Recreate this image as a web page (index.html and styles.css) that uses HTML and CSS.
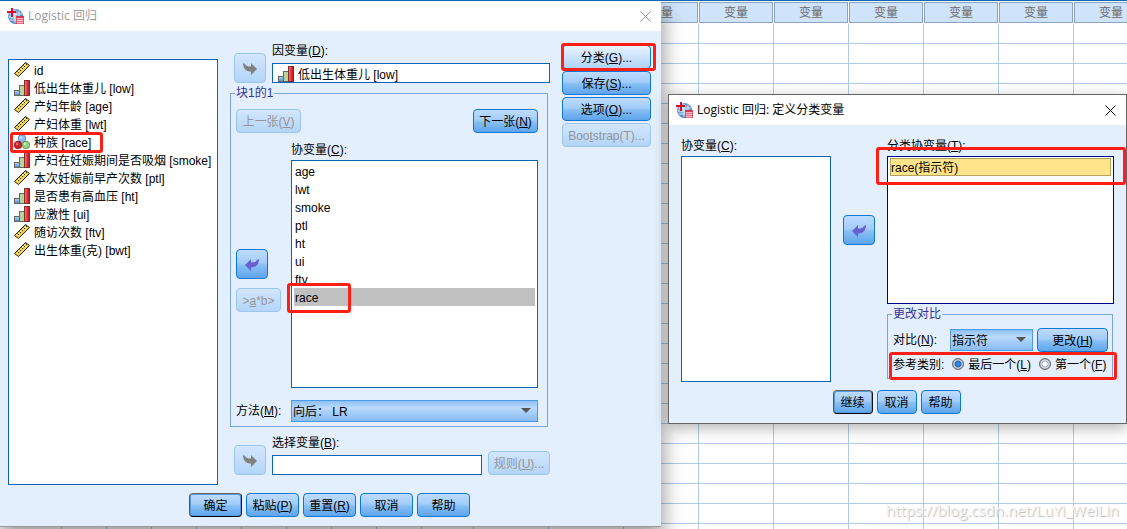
FILE: index.html
```html
<!DOCTYPE html>
<html lang="zh-CN">
<head>
    <meta charset="UTF-8">
    <meta name="viewport" content="width=device-width, initial-scale=1.0">
    <title>Logistic 回归</title>
    <link rel="stylesheet" href="styles.css">
</head>
<body>
    <!-- 图标定义 -->
    <svg class="defs" width="0" height="0" aria-hidden="true">
        <defs>
            <linearGradient id="gBlue" x1="0" y1="0" x2="0" y2="1"><stop offset="0" stop-color="#b5d4f5"/><stop offset="1" stop-color="#4a8ad2"/></linearGradient>
            <linearGradient id="gRed" x1="0" y1="0" x2="1" y2="0"><stop offset="0" stop-color="#ff7777"/><stop offset="1" stop-color="#c80008"/></linearGradient>
            <radialGradient id="gGlobe" cx="0.4" cy="0.4" r="0.7"><stop offset="0" stop-color="#b9d8f2"/><stop offset="1" stop-color="#2a6fb4"/></radialGradient>
        </defs>
        <symbol id="scale" viewBox="0 0 16 16">
            <path d="M0.500 11.500L11.500 0.500L15.500 3.500L4.500 14.500Z" fill="#f8cf3c" stroke="#222" stroke-width="1"/>
            <path d="M2.500 11.500L12 2" stroke="#fff2a8" stroke-width="1"/>
            <path d="M5.500 7.500l1.500 1.500M7.500 5.500l1.500 1.500M9.500 3.500l1.500 1.500M3.500 9.500l1.500 1.500M11.500 1.500l1.500 1.500" stroke="#222" stroke-width="1"/>
        </symbol>
        <symbol id="ordinal" viewBox="0 0 16 16">
            <rect x="0.500" y="10.500" width="5" height="5" fill="url(#gBlue)" stroke="#666"/>
            <rect x="5.500" y="5.500" width="5" height="10" fill="#b5d596" stroke="#666"/>
            <rect x="10.500" y="0.500" width="5" height="15" fill="url(#gRed)" stroke="#7a3030"/>
        </symbol>
        <symbol id="nominal" viewBox="0 0 16 16">
            <circle cx="8" cy="4.500" r="3.800" fill="#8fbdf5" stroke="#4a7ec0" stroke-width="0.800"/>
            <circle cx="4" cy="11" r="3.800" fill="#c9202c" stroke="#8c1420" stroke-width="0.800"/>
            <circle cx="12" cy="11" r="3.800" fill="#98cf80" stroke="#4f8a3c" stroke-width="0.800"/>
            <circle cx="7" cy="3.500" r="1.200" fill="#d5e8ff"/>
            <circle cx="3" cy="10" r="1.200" fill="#ee7a80"/>
            <circle cx="11" cy="10" r="1.200" fill="#d5f0c8"/>
        </symbol>
        <symbol id="spss" viewBox="0 0 17 17">
            <circle cx="8.500" cy="8.500" r="7.500" fill="url(#gGlobe)"/>
            <path d="M3 6h12M2 9h8M3 12h6M8 2v13M12 3v5" stroke="#e8f3fc" stroke-width="0.800"/>
            <path d="M4 0h2v3h3v2h-3v4h-2v-4h-4v-2h4z" fill="#d4102c"/>
            <rect x="9" y="8" width="8" height="8" fill="#d83850"/>
            <path d="M9.500 10.500h7M9.500 12.500h7M9.500 14.500h7M11 10v6M13 10v6M15 10v6" stroke="#fbd9de" stroke-width="0.700"/>
        </symbol>
        <symbol id="arrow" viewBox="0 0 16 14">
            <path d="M1 1l2 1c1 2 2.500 2.500 6 2.500v-3.500l6 6l-6 6v-3.500c-4.500 0-8-2.500-8-8.500z"/>
        </symbol>
        <symbol id="close" viewBox="0 0 11 11">
            <path d="M0.500 0.500l10 10M10.500 0.500l-10 10" fill="none" stroke="currentColor"/>
        </symbol>
    </svg>

    <div class="desktop">
        <table class="sheet">
            <colgroup id="sheetCols"></colgroup>
            <thead><tr id="sheetHead"></tr></thead>
            <tbody id="sheetBody"></tbody>
        </table>
        <p class="watermark">https://blog.csdn.net/LuYi_WeiLin</p>

        <!-- Logistic 回归 -->
        <section class="dialog dialog-main" aria-labelledby="mainTitle">
            <header class="titlebar inactive">
                <svg class="logo"><use href="#spss"/></svg>
                <h1 id="mainTitle">Logistic 回归</h1>
                <button class="close" aria-label="关闭"><svg><use href="#close"/></svg></button>
            </header>
            <div class="main-cols">
                <ul class="list source-list" role="listbox" aria-label="变量">
                    <li><svg><use href="#scale"/></svg>id</li>
                    <li><svg><use href="#ordinal"/></svg>低出生体重儿 [low]</li>
                    <li><svg><use href="#scale"/></svg>产妇年龄 [age]</li>
                    <li><svg><use href="#scale"/></svg>产妇体重 [lwt]</li>
                    <li class="marked"><svg><use href="#nominal"/></svg>种族 [race]<i class="mark mark-source"></i></li>
                    <li><svg><use href="#ordinal"/></svg>产妇在妊娠期间是否吸烟 [smoke]</li>
                    <li><svg><use href="#scale"/></svg>本次妊娠前早产次数 [ptl]</li>
                    <li><svg><use href="#ordinal"/></svg>是否患有高血压 [ht]</li>
                    <li><svg><use href="#ordinal"/></svg>应激性 [ui]</li>
                    <li><svg><use href="#scale"/></svg>随访次数 [ftv]</li>
                    <li><svg><use href="#scale"/></svg>出生体重(克) [bwt]</li>
                </ul>

                <div class="middle">
                    <div class="move-row">
                        <button class="btn move" disabled aria-label="移入因变量"><svg><use href="#arrow"/></svg></button>
                        <div class="field">
                            <span class="label" id="depLabel">因变量(<u>D</u>):</span>
                            <ul class="list single" role="listbox" aria-labelledby="depLabel">
                                <li><svg><use href="#ordinal"/></svg>低出生体重儿 [low]</li>
                            </ul>
                        </div>
                    </div>

                    <fieldset class="group block">
                        <legend>块1的1</legend>
                        <div class="pager">
                            <button class="btn" disabled>上一张(<u>V</u>)</button>
                            <button class="btn">下一张(<u>N</u>)</button>
                        </div>
                        <div class="covariates">
                            <div class="side">
                                <button class="btn move back" aria-label="移出协变量"><svg><use href="#arrow"/></svg></button>
                                <button class="btn" disabled>&gt;<u>a</u>*b&gt;</button>
                            </div>
                            <div class="field tight">
                                <span class="label" id="covLabel">协变量(<u>C</u>):</span>
                                <ul class="list cov-list" role="listbox" aria-labelledby="covLabel">
                                    <li>age</li>
                                    <li>lwt</li>
                                    <li>smoke</li>
                                    <li>ptl</li>
                                    <li>ht</li>
                                    <li>ui</li>
                                    <li>ftv</li>
                                    <li class="marked selected">race<i class="mark mark-cov"></i></li>
                                </ul>
                            </div>
                        </div>
                        <div class="method">
                            <label for="method">方法(<u>M</u>):</label>
                            <span class="select"><select id="method"><option>向后： LR</option></select></span>
                        </div>
                    </fieldset>

                    <div class="move-row">
                        <button class="btn move" disabled aria-label="移入选择变量"><svg><use href="#arrow"/></svg></button>
                        <div class="field">
                            <label class="label" for="selVar">选择变量(<u>B</u>):</label>
                            <input class="text" id="selVar" type="text">
                        </div>
                        <button class="btn rule" disabled>规则(<u>U</u>)...</button>
                    </div>
                </div>

                <div class="options">
                    <div class="marked"><button class="btn hot">分类(<u>G</u>)...</button><i class="mark mark-option"></i></div>
                    <button class="btn">保存(<u>S</u>)...</button>
                    <button class="btn">选项(<u>O</u>)...</button>
                    <button class="btn" disabled>Boo<u>t</u>strap(T)...</button>
                </div>
            </div>
            <footer class="actions">
                <button class="btn default">确定</button>
                <button class="btn">粘贴(<u>P</u>)</button>
                <button class="btn">重置(<u>R</u>)</button>
                <button class="btn">取消</button>
                <button class="btn">帮助</button>
            </footer>
        </section>

        <!-- 定义分类变量 -->
        <section class="dialog dialog-cat" aria-labelledby="catTitle">
            <header class="titlebar">
                <svg class="logo"><use href="#spss"/></svg>
                <h1 id="catTitle">Logistic 回归: 定义分类变量</h1>
                <button class="close" aria-label="关闭"><svg><use href="#close"/></svg></button>
            </header>
            <div class="cat-cols">
                <div class="field tight">
                    <span class="label" id="catCovLabel">协变量(<u>C</u>):</span>
                    <ul class="list fill" role="listbox" aria-labelledby="catCovLabel"></ul>
                </div>
                <button class="btn move back" aria-label="移回协变量"><svg><use href="#arrow"/></svg></button>
                <div class="cat-right">
                    <div class="field tight">
                        <span class="label" id="catLabel">分类协变量(<u>T</u>):</span>
                        <ul class="list cat-list" role="listbox" aria-labelledby="catLabel">
                            <li class="marked focused">race(指示符)<i class="mark mark-cat"></i></li>
                        </ul>
                    </div>
                    <fieldset class="group contrast">
                        <legend>更改对比</legend>
                        <div class="contrast-row">
                            <label for="contrast">对比(<u>N</u>):</label>
                            <span class="select"><select id="contrast"><option>指示符</option></select></span>
                            <button class="btn">更改(<u>H</u>)</button>
                        </div>
                        <div class="marked reference">
                            <span>参考类别:</span>
                            <label><input type="radio" name="ref" checked>最后一个(<u>L</u>)</label>
                            <label><input type="radio" name="ref">第一个(<u>F</u>)</label>
                            <i class="mark mark-ref"></i>
                        </div>
                    </fieldset>
                </div>
            </div>
            <footer class="actions">
                <button class="btn default">继续</button>
                <button class="btn">取消</button>
                <button class="btn">帮助</button>
            </footer>
        </section>
    </div>

    <script>
        // 数据表各列宽度
        const widths = [62, 45, 45, 45, 45, 45, 45, 45, 45, 52, 75, 75, 75, 75, 75, 75, 75, 75, 75];
        const firstEmpty = 11;
        const rowCount = 26;

        document.getElementById('sheetCols').innerHTML =
            widths.map(w => `<col style="width:${w}px">`).join('');
        document.getElementById('sheetHead').innerHTML =
            widths.map((w, i) => `<th><span>${i >= firstEmpty ? '变量' : ''}</span></th>`).join('');
        document.getElementById('sheetBody').innerHTML =
            `<tr>${'<td></td>'.repeat(widths.length)}</tr>`.repeat(rowCount);
    </script>
</body>
</html>
```

FILE: styles.css
```css
* {
    box-sizing: border-box;
}
body {
    margin: 0;
    font-family: "Liberation Sans", "Noto Sans CJK SC", sans-serif;
    font-size: 12px;
    line-height: 16px;
    color: #000;
}
.defs {
    position: absolute;
}
.desktop {
    position: relative;
    height: 100vh;
    overflow: hidden;
    background: #fff;
    border-top: 1px solid #1763b3;
}
ul {
    margin: 0;
    padding: 0;
    list-style: none;
}
button, input, select {
    font: inherit;
    color: inherit;
    margin: 0;
}

/* 数据表 */
.sheet {
    width: 1000px;
    table-layout: fixed;
    border-collapse: separate;
    border-spacing: 0;
}
.sheet th {
    height: 23px;
    padding: 1px 1px 1px 0;
    font-weight: normal;
    color: #6b6b6b;
}
.sheet th span {
    display: block;
    height: 21px;
    line-height: 20px;
    border: 1px solid #8ba3c4;
    background: #cfe3fb;
}
.sheet td {
    height: 20px;
    padding: 0;
    border-right: 1px solid #aecbe8;
    border-bottom: 1px solid #aecbe8;
}
.watermark {
    position: absolute;
    right: 8px;
    bottom: 9px;
    margin: 0;
    font-family: "Open Sans", sans-serif;
    font-size: 15px;
    line-height: 20px;
    color: #f4f4f4;
    text-shadow: 1px 1px 1px #bbb;
}

/* 对话框 */
.dialog {
    position: absolute;
    background: #e3effc;
}
.dialog-main {
    left: 0;
    top: -1px;
    width: 661px;
    border-top: 1px solid #2f5f94;
    border-bottom: 1px solid #999;
    box-shadow: 1px 10px 20px 1px rgba(0, 0, 0, 0.4);
}
.dialog-cat {
    left: 668px;
    top: 93px;
    width: 459px;
    border: 1px solid #666;
    box-shadow: 0 4px 14px rgba(0, 0, 0, 0.3);
}
.titlebar {
    display: flex;
    align-items: center;
    height: 30px;
    padding: 0 10px 0 7px;
    background: #fff;
}
.titlebar h1 {
    flex: 1;
    margin: 0 0 0 4px;
    font-family: "Open Sans", "Noto Sans CJK SC", sans-serif;
    font-size: 12px;
    font-weight: normal;
}
.logo {
    width: 17px;
    height: 17px;
}
.inactive {
    color: #999;
}
.close {
    display: flex;
    padding: 0;
    border: 0;
    background: none;
}
.close svg {
    width: 11px;
    height: 11px;
}
.main-cols {
    display: grid;
    grid-template-columns: 210px 1fr 89px;
    column-gap: 12px;
    padding: 11px 10px 0 8px;
}
.cat-cols {
    display: grid;
    grid-template-columns: 150px 32px 1fr;
    column-gap: 12px;
    padding: 12px 12px 0;
}
.cat-cols > .move {
    margin-top: 78px;
}
.actions {
    display: flex;
    justify-content: center;
    gap: 4px;
    padding: 8px 2px 9px 0;
}
.actions .btn {
    width: 53px;
}
.dialog-cat .actions .btn {
    width: 40px;
}

/* 列表和输入框 */
.list {
    padding: 1px 2px;
    border: 1px solid #0a64b4;
    background: #fff;
}
.list li {
    display: flex;
    align-items: center;
    height: 18px;
    padding: 2px 0 0 1px;
    white-space: nowrap;
}
.list svg {
    flex: none;
    width: 16px;
    height: 16px;
    margin: 0 4px 2px 0;
}
.source-list {
    margin-top: 17px;
    padding-left: 4px;
}
.single {
    height: 20px;
    padding-left: 4px;
    overflow: hidden;
}
.cov-list {
    height: 228px;
}
.cat-list {
    height: 148px;
    border-color: #00008b;
}
.fill {
    flex: 1;
}
.list .selected {
    background: #c0c0c0;
}
.list .focused {
    border: 1px solid #b3a45c;
    padding-left: 0;
    background: #ffe48c;
}
.field {
    display: flex;
    flex: 1;
    flex-direction: column;
    gap: 3px;
    min-width: 0;
}
.tight {
    gap: 1px;
}
.label {
    line-height: 18px;
}
.text {
    width: 100%;
    height: 20px;
    padding: 0 3px;
    border: 1px solid #0a64b4;
    background: #fff;
}

/* 按钮 */
.btn {
    height: 24px;
    padding: 2px 0 0;
    border: 1px solid #0c78d4;
    border-radius: 4px;
    background: linear-gradient(#bedcff 0%, #a3cdfa 45%, #88bef4 55%, #5ea5ec 100%);
    white-space: nowrap;
}
.btn:disabled {
    border-color: #98c6ee;
    background: linear-gradient(#d3e6fc, #b4d5f8);
    color: #959595;
}
.hot {
    background: linear-gradient(#e8f3ff, #b0d3fa);
}
.default {
    border-color: #666 #111 #000 #555;
    box-shadow: inset 0 0 0 1px #5a9bdc;
}
.move {
    display: flex;
    align-items: center;
    justify-content: center;
    width: 32px;
    height: 30px;
    fill: #6960d0;
}
.move:disabled {
    fill: #808080;
}
.move svg {
    width: 16px;
    height: 14px;
}
.back svg {
    transform: scaleX(-1);
}
.select {
    position: relative;
    display: block;
}
.select select {
    display: block;
    width: 100%;
    height: 22px;
    padding: 2px 1px 0;
    appearance: none;
    border: 1px solid #4c9ae4;
    border-radius: 0;
    background: linear-gradient(#8cc0f6 0%, #bcdafb 35%, #a5cdf8 60%, #88bcf2 100%);
}
.select::after {
    content: "";
    position: absolute;
    right: 7px;
    top: 8px;
    border: 5px solid transparent;
    border-top-color: #555;
    border-bottom: 0;
}

/* 主对话框中部 */
.move-row {
    display: flex;
    align-items: flex-end;
    gap: 6px;
    padding-left: 4px;
}
.middle {
    padding-bottom: 10px;
}
.rule {
    width: 62px;
}
.group {
    margin: 2px 0 0;
    border: 1px solid #7aa7d8;
    min-width: 0;
}
.group legend {
    padding: 0 1px;
    color: #333399;
}
.block {
    margin: 2px 2px 7px 0;
    padding: 8px 9px 4px 5px;
}
.block legend, .contrast legend {
    margin-left: -1px;
}
.pager {
    display: flex;
    justify-content: space-between;
    margin-bottom: 8px;
}
.pager .btn {
    width: 65px;
}
.covariates, .method {
    display: grid;
    grid-template-columns: 45px 1fr;
    column-gap: 10px;
}
.method {
    align-items: center;
    margin-top: 12px;
    white-space: nowrap;
}
.side {
    display: flex;
    flex-direction: column;
    justify-content: flex-end;
    gap: 9px;
    padding-bottom: 76px;
}
.options {
    display: flex;
    flex-direction: column;
    gap: 2px;
    padding-top: 3px;
}
.options .btn {
    width: 100%;
}

/* 更改对比 */
.contrast {
    margin: 2px 1px 3px 0;
    padding: 6px 4px 5px 5px;
}
.contrast-row {
    display: grid;
    grid-template-columns: 53px 1fr 71px;
    align-items: center;
    gap: 4px;
    margin-bottom: 5px;
}
.reference {
    display: flex;
    align-items: center;
    gap: 8px;
    white-space: nowrap;
}
.reference label {
    display: flex;
    align-items: center;
}
.reference input {
    width: 12px;
    height: 12px;
    margin: 0 4px 2px 0;
    appearance: none;
    border: 1px solid #666;
    border-radius: 50%;
    background: radial-gradient(circle, #fff 0 2px, #8fb0d8 3px, #e4e4e4 4px, #aaa 5px);
}
.reference input:checked {
    background: radial-gradient(circle, #2f86e0 0 2px, #1d5fb4 3px, #e4e4e4 4px, #aaa 5px);
}

/* 红色标注框 */
.marked {
    position: relative;
}
.mark {
    position: absolute;
    z-index: 1;
    border: 3px solid #ff1f14;
    border-radius: 3px;
    pointer-events: none;
}
.mark-source {
    inset: -1px 112px -2px -3px;
}
.mark-cov {
    inset: -5px auto -7px -7px;
    width: 64px;
}
.mark-cat {
    inset: -12px -16px -10px -15px;
}
.mark-option {
    inset: -2px -5px -2px -1px;
}
.mark-ref {
    inset: -5px -9px -7px -4px;
}
```
